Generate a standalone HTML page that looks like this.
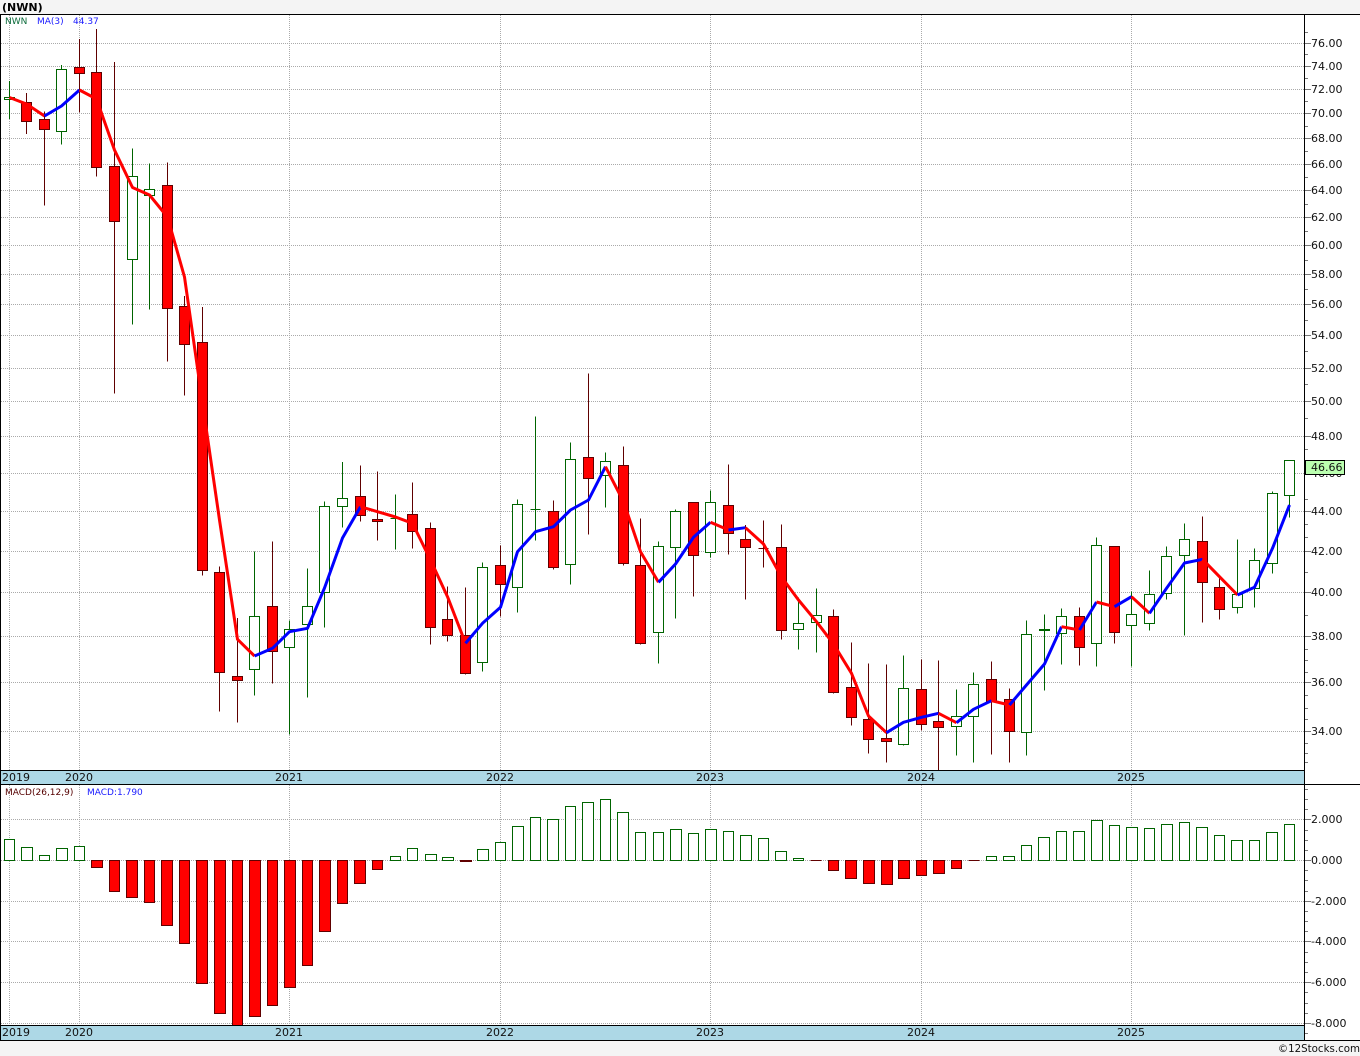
<!DOCTYPE html>
<html>
<head>
<meta charset="utf-8">
<title>NWN</title>
<style>
html,body{margin:0;padding:0;background:#f4f4f4;width:1360px;height:1056px;overflow:hidden}
svg{display:block}
text{font-family:"DejaVu Sans","Liberation Sans",sans-serif;font-size:11px;fill:#111}
</style>
</head>
<body>
<svg width="1360" height="1056" viewBox="0 0 1360 1056" xmlns="http://www.w3.org/2000/svg">
<rect x="0" y="0" width="1360" height="1056" fill="#f4f4f4"/>
<rect x="0" y="14" width="1360" height="1026" fill="#fff"/>
<text x="2" y="11" style="font-weight:bold;fill:#000">(NWN)</text>

<!-- grid -->
<g shape-rendering="crispEdges" fill="none" stroke="#aaaaaa" stroke-dasharray="1 1">
<path d="M1 43.5H1304M1 66.5H1304M1 89.5H1304M1 113.5H1304M1 138.5H1304M1 164.5H1304M1 190.5H1304M1 217.5H1304M1 245.5H1304M1 274.5H1304M1 304.5H1304M1 335.5H1304M1 368.5H1304M1 401.5H1304M1 436.5H1304M1 473.5H1304M1 511.5H1304M1 551.5H1304M1 592.5H1304M1 636.5H1304M1 682.5H1304M1 731.5H1304"/>
<path d="M1 819.5H1304M1 860.5H1304M1 901.5H1304M1 941.5H1304M1 982.5H1304M1 1023.5H1304"/>
<path d="M9.5 15V770M79.5 15V770M289.5 15V770M500.5 15V770M710.5 15V770M921.5 15V770M1131.5 15V770"/>
<path d="M9.5 785V1025M79.5 785V1025M289.5 785V1025M500.5 785V1025M710.5 785V1025M921.5 785V1025M1131.5 785V1025"/>
</g>

<text x="5" y="24" style="font-size:9px;fill:#0a6a3a">NWN</text>
<text x="37" y="24" style="font-size:9px;fill:#1a1aff">MA(3)</text>
<text x="73" y="24" style="font-size:9px;fill:#1a1aff">44.37</text>
<text x="5" y="795" style="font-size:9px;fill:#500">MACD(26,12,9)</text>
<text x="87" y="795" style="font-size:9px;fill:#1a1aff">MACD:1.790</text>

<!-- wicks -->
<g shape-rendering="crispEdges" fill="none">
<path stroke="#006400" d="M9.5 81V119M61.5 65V144.5M132.5 148.5V324.5M149.5 163.5V309.5M254.5 551.5V695.5M289.5 620.5V734.5M307.5 568.5V697.5M324.5 501.5V627.5M342.5 462V527.5M395.5 494.5V549.5M482.5 562.5V671.5M517.5 499.5V612.5M535.5 416.5V540.5M570.5 442.5V584.5M605.5 452.5V507.5M658.5 541.5V663.5M675.5 509.5V618.5M710.5 490.5V557.5M798.5 597.5V649.5M816.5 588.5V652.5M903.5 655.5V745.5M956.5 689.5V755.5M973.5 672.5V762.5M1026.5 620.5V755.5M1044.5 614.5V690.5M1061.5 608.5V664.5M1096.5 537.5V666.5M1131.5 591.5V666.5M1149.5 570.5V630.5M1166.5 546.5V599.5M1184.5 523.5V635.5M1237.5 539.5V613.5M1254.5 548.5V607.5M1272.5 491.5V573.5M1289.5 460.5V517.5"/>
<path stroke="#600000" d="M26.5 93V134M44.5 111.5V205.5M79.5 39V112.5M96.5 29V176.5M114.5 62V393.5M167.5 162.5V361.5M184.5 296V395.5M202.5 307V575.5M219.5 566.5V711.5M237.5 618V722.5M272.5 541.5V683.5M360.5 465.5V521.5M377.5 471.5V540.5M412.5 482.5V548.5M430.5 522.5V644.5M447.5 586.5V641.5M465.5 587.5V674.5M500.5 545.5V616.5M553.5 500.5V569.5M588.5 373.5V534.5M623.5 446.5V565.5M640.5 518.5V644.5M693.5 502V596.5M728.5 464.5V554.5M745.5 525V599.5M763.5 520.5V567.5M781.5 524.5V639.5M833.5 609.5V693.5M851.5 642.5V725.5M868.5 663.5V753.5M886.5 664.5V762.5M921.5 659.5V730.5M938.5 660.5V770M991.5 661.5V754.5M1009.5 688.5V762.5M1079.5 607.5V665.5M1114.5 546.5V643.5M1202.5 516.5V622.5M1219.5 578.5V619.5"/>
</g>

<!-- bodies -->
<g shape-rendering="crispEdges">
<path fill="#fff" stroke="#006400" d="M4.5 97.5h10V99.5h-10zM56.5 69.5h10V131.5h-10zM127.5 176.5h10V259.5h-10zM144.5 189.5h10V195.5h-10zM249.5 616.5h10V669.5h-10zM284.5 629.5h10V647.5h-10zM302.5 606.5h10V624.5h-10zM319.5 506.5h10V592.5h-10zM337.5 498.5h10V506.5h-10zM390.5 518.5h10zM477.5 567.5h10V662.5h-10zM512.5 504.5h10V587.5h-10zM530.5 509.5h10zM565.5 459.5h10V564.5h-10zM600.5 461.5h10V475.5h-10zM653.5 546.5h10V632.5h-10zM670.5 511.5h10V547.5h-10zM705.5 502.5h10V552.5h-10zM793.5 623.5h10V629.5h-10zM811.5 615.5h10V622.5h-10zM898.5 688.5h10V744.5h-10zM951.5 716.5h10V726.5h-10zM968.5 684.5h10V716.5h-10zM1021.5 634.5h10V732.5h-10zM1039.5 629.5h10V630.5h-10zM1056.5 616.5h10V633.5h-10zM1091.5 545.5h10V643.5h-10zM1126.5 614.5h10V625.5h-10zM1144.5 594.5h10V623.5h-10zM1161.5 556.5h10V593.5h-10zM1179.5 539.5h10V555.5h-10zM1232.5 594.5h10V607.5h-10zM1249.5 560.5h10V588.5h-10zM1267.5 493.5h10V563.5h-10zM1284.5 460.5h10V495.5h-10z"/>
<path fill="#f00" stroke="#600000" d="M21.5 102.5h10V121.5h-10zM39.5 119.5h10V129.5h-10zM74.5 67.5h10V73.5h-10zM91.5 72.5h10V167.5h-10zM109.5 166.5h10V221.5h-10zM162.5 185.5h10V308.5h-10zM179.5 306.5h10V344.5h-10zM197.5 342.5h10V570.5h-10zM214.5 572.5h10V672.5h-10zM232.5 676.5h10V680.5h-10zM267.5 606.5h10V651.5h-10zM355.5 496.5h10V515.5h-10zM372.5 519.5h10V521.5h-10zM407.5 514.5h10V531.5h-10zM425.5 528.5h10V627.5h-10zM442.5 619.5h10V635.5h-10zM460.5 635.5h10V673.5h-10zM495.5 565.5h10V584.5h-10zM548.5 511.5h10V567.5h-10zM583.5 457.5h10V478.5h-10zM618.5 465.5h10V563.5h-10zM635.5 565.5h10V643.5h-10zM688.5 502.5h10V555.5h-10zM723.5 505.5h10V533.5h-10zM740.5 539.5h10V547.5h-10zM758.5 548.5h10zM776.5 547.5h10V630.5h-10zM828.5 616.5h10V692.5h-10zM846.5 687.5h10V717.5h-10zM863.5 719.5h10V739.5h-10zM881.5 738.5h10V741.5h-10zM916.5 689.5h10V724.5h-10zM933.5 721.5h10V727.5h-10zM986.5 679.5h10V701.5h-10zM1004.5 699.5h10V731.5h-10zM1074.5 616.5h10V647.5h-10zM1109.5 546.5h10V632.5h-10zM1197.5 541.5h10V582.5h-10zM1214.5 587.5h10V609.5h-10z"/>
</g>

<!-- moving average -->
<g fill="none" stroke-width="3" stroke-linejoin="round">
<polyline stroke="#f00" points="9.5,97.5 26.5,104 44.5,116"/>
<polyline stroke="#00f" points="44.5,116 61.5,106 79.5,90"/>
<polyline stroke="#f00" points="79.5,90 96.5,99 114.5,150 132.5,187.5 149.5,195 167.5,217 184.5,277 202.5,403 219.5,520 237.5,639.3 254.5,656"/>
<polyline stroke="#00f" points="254.5,656 272.5,648.3 289.5,631.7 307.5,628.3 324.5,588 342.5,538 360.5,506.7"/>
<polyline stroke="#f00" points="360.5,506.7 377.5,511.7 395.5,517 412.5,523.3 430.5,560 447.5,596.7 465.5,643.3"/>
<polyline stroke="#00f" points="465.5,643.3 482.5,623.3 500.5,607.3 517.5,551.7 535.5,531.7 553.5,526.7 570.5,510 588.5,500 605.5,466.7"/>
<polyline stroke="#f00" points="605.5,466.7 623.5,501.7 640.5,551.7 658.5,582.3"/>
<polyline stroke="#00f" points="658.5,582.3 675.5,564 693.5,537.3 710.5,522.3"/>
<polyline stroke="#f00" points="710.5,522.3 728.5,530"/>
<polyline stroke="#00f" points="728.5,530 745.5,527.7"/>
<polyline stroke="#f00" points="745.5,527.7 763.5,544 781.5,577 798.5,600 816.5,621.7 833.5,644 851.5,673.3 868.5,716 886.5,732.7"/>
<polyline stroke="#00f" points="886.5,732.7 903.5,722.3 921.5,717.3 938.5,713.3"/>
<polyline stroke="#f00" points="938.5,713.3 956.5,722.7"/>
<polyline stroke="#00f" points="956.5,722.7 973.5,709.3 991.5,700.7"/>
<polyline stroke="#f00" points="991.5,700.7 1009.5,705"/>
<polyline stroke="#00f" points="1009.5,705 1026.5,685 1044.5,664 1061.5,626.7"/>
<polyline stroke="#f00" points="1061.5,626.7 1079.5,630"/>
<polyline stroke="#00f" points="1079.5,630 1096.5,602"/>
<polyline stroke="#f00" points="1096.5,602 1114.5,606.7"/>
<polyline stroke="#00f" points="1114.5,606.7 1131.5,596.7"/>
<polyline stroke="#f00" points="1131.5,596.7 1149.5,613.3"/>
<polyline stroke="#00f" points="1149.5,613.3 1166.5,588.3 1184.5,563 1202.5,559.3"/>
<polyline stroke="#f00" points="1202.5,559.3 1219.5,576.7 1237.5,595"/>
<polyline stroke="#00f" points="1237.5,595 1254.5,587.3 1272.5,548.3 1289.5,505"/>
</g>

<!-- MACD bars -->
<g shape-rendering="crispEdges">
<path fill="#fff" stroke="#006400" d="M4.5 839.5h10V860.5h-10zM21.5 847.5h11V860.5h-11zM39.5 855.5h10V860.5h-10zM56.5 848.5h11V860.5h-11zM74.5 846.5h10V860.5h-10zM390.5 856.5h10V860.5h-10zM407.5 848.5h10V860.5h-10zM425.5 854.5h11V860.5h-11zM442.5 857.5h11V860.5h-11zM477.5 849.5h11V860.5h-11zM495.5 842.5h10V860.5h-10zM512.5 826.5h11V860.5h-11zM530.5 817.5h10V860.5h-10zM547.5 819.5h11V860.5h-11zM565.5 806.5h10V860.5h-10zM582.5 802.5h11V860.5h-11zM600.5 799.5h10V860.5h-10zM617.5 812.5h11V860.5h-11zM635.5 832.5h10V860.5h-10zM653.5 832.5h10V860.5h-10zM670.5 829.5h11V860.5h-11zM688.5 833.5h10V860.5h-10zM705.5 829.5h11V860.5h-11zM723.5 831.5h10V860.5h-10zM740.5 835.5h11V860.5h-11zM758.5 838.5h10V860.5h-10zM775.5 851.5h11V860.5h-11zM793.5 858.5h10V860.5h-10zM986.5 856.5h10V860.5h-10zM1003.5 856.5h11V860.5h-11zM1021.5 845.5h10V860.5h-10zM1038.5 837.5h11V860.5h-11zM1056.5 831.5h10V860.5h-10zM1073.5 831.5h11V860.5h-11zM1091.5 820.5h11V860.5h-11zM1109.5 825.5h10V860.5h-10zM1126.5 827.5h11V860.5h-11zM1144.5 828.5h10V860.5h-10zM1161.5 824.5h11V860.5h-11zM1179.5 822.5h10V860.5h-10zM1196.5 827.5h11V860.5h-11zM1214.5 835.5h10V860.5h-10zM1231.5 840.5h11V860.5h-11zM1249.5 840.5h10V860.5h-10zM1266.5 832.5h11V860.5h-11zM1284.5 824.5h10V860.5h-10z"/>
<path fill="#f00" stroke="#600000" d="M91.5 860.5h11V867.5h-11zM109.5 860.5h10V891.5h-10zM126.5 860.5h11V897.5h-11zM144.5 860.5h10V902.5h-10zM161.5 860.5h11V925.5h-11zM179.5 860.5h10V943.5h-10zM196.5 860.5h11V983.5h-11zM214.5 860.5h11V1013.5h-11zM232.5 860.5h10V1026h-10zM249.5 860.5h11V1016.5h-11zM267.5 860.5h10V1005.5h-10zM284.5 860.5h11V987.5h-11zM302.5 860.5h10V965.5h-10zM319.5 860.5h11V931.5h-11zM337.5 860.5h10V903.5h-10zM354.5 860.5h11V883.5h-11zM372.5 860.5h10V869.5h-10zM460.5 860.5h11V861.5h-11zM810.5 860.5h11zM828.5 860.5h10V870.5h-10zM845.5 860.5h11V878.5h-11zM863.5 860.5h11V883.5h-11zM881.5 860.5h11V884.5h-11zM898.5 860.5h11V878.5h-11zM916.5 860.5h10V875.5h-10zM933.5 860.5h11V873.5h-11zM951.5 860.5h10V868.5h-10zM968.5 860.5h11z"/>
</g>

<!-- date bars -->
<g shape-rendering="crispEdges">
<rect x="0" y="771" width="1304" height="13" fill="#add8e6"/>
<rect x="0" y="1026" width="1304" height="14" fill="#add8e6"/>
<rect x="0" y="14" width="1360" height="1" fill="#000"/>
<rect x="0" y="770" width="1304" height="1" fill="#000"/>
<rect x="0" y="784" width="1360" height="1" fill="#000"/>
<rect x="0" y="1025" width="1304" height="1" fill="#000"/>
<rect x="0" y="1040" width="1360" height="1" fill="#000"/>
<rect x="0" y="14" width="1" height="1027" fill="#000"/>
<rect x="1304" y="14" width="1" height="1027" fill="#000"/>
</g>
<g>
<text x="2" y="781">2019</text><text x="79" y="781" text-anchor="middle">2020</text><text x="289" y="781" text-anchor="middle">2021</text><text x="500" y="781" text-anchor="middle">2022</text><text x="710" y="781" text-anchor="middle">2023</text><text x="921" y="781" text-anchor="middle">2024</text><text x="1131" y="781" text-anchor="middle">2025</text>
<text x="2" y="1036">2019</text><text x="79" y="1036" text-anchor="middle">2020</text><text x="289" y="1036" text-anchor="middle">2021</text><text x="500" y="1036" text-anchor="middle">2022</text><text x="710" y="1036" text-anchor="middle">2023</text><text x="921" y="1036" text-anchor="middle">2024</text><text x="1131" y="1036" text-anchor="middle">2025</text>
</g>

<!-- axis ticks -->
<g shape-rendering="crispEdges" fill="none" stroke="#777">
<path d="M1305 32.5h3M1305 54.5h3M1305 78.5h3M1305 101.5h3M1305 126.5h3M1305 151.5h3M1305 177.5h3M1305 204.5h3M1305 231.5h3M1305 260.5h3M1305 289.5h3M1305 320.5h3M1305 351.5h3M1305 384.5h3M1305 418.5h3M1305 449.5h3M1305 499.5h3M1305 524.5h3M1305 537.5h3M1305 572.5h3M1305 615.5h3M1305 649.5h3M1305 660.5h3M1305 672.5h3M1305 695.5h3M1305 708.5h3M1305 719.5h3M1305 743.5h3M1305 753.5h3M1305 762.5h3"/>
<path d="M1305 43.5h6M1305 66.5h6M1305 89.5h6M1305 113.5h6M1305 138.5h6M1305 164.5h6M1305 190.5h6M1305 217.5h6M1305 245.5h6M1305 274.5h6M1305 304.5h6M1305 335.5h6M1305 368.5h6M1305 401.5h6M1305 436.5h6M1305 473.5h6M1305 511.5h6M1305 551.5h6M1305 592.5h6M1305 636.5h6M1305 682.5h6M1305 731.5h6"/>
<path d="M1305 789.5h3M1305 799.5h3M1305 809.5h3M1305 830.5h3M1305 840.5h3M1305 850.5h3M1305 870.5h3M1305 880.5h3M1305 891.5h3M1305 911.5h3M1305 921.5h3M1305 931.5h3M1305 952.5h3M1305 962.5h3M1305 972.5h3M1305 992.5h3M1305 1003.5h3M1305 1013.5h3M1305 1033.5h3"/>
<path d="M1305 819.5h6M1305 860.5h6M1305 901.5h6M1305 941.5h6M1305 982.5h6M1305 1023.5h6"/>
</g>

<!-- axis labels -->
<g>
<text x="1311" y="47">76.00</text><text x="1311" y="70">74.00</text><text x="1311" y="93">72.00</text><text x="1311" y="117">70.00</text><text x="1311" y="142">68.00</text><text x="1311" y="168">66.00</text><text x="1311" y="194">64.00</text><text x="1311" y="221">62.00</text><text x="1311" y="249">60.00</text><text x="1311" y="278">58.00</text><text x="1311" y="308">56.00</text><text x="1311" y="339">54.00</text><text x="1311" y="372">52.00</text><text x="1311" y="405">50.00</text><text x="1311" y="440">48.00</text><text x="1311" y="477">46.00</text><text x="1311" y="515">44.00</text><text x="1311" y="555">42.00</text><text x="1311" y="596">40.00</text><text x="1311" y="640">38.00</text><text x="1311" y="686">36.00</text><text x="1311" y="735">34.00</text>
<text x="1311" y="823">2.000</text><text x="1311" y="864">0.000</text><text x="1311" y="905">-2.000</text><text x="1311" y="945">-4.000</text><text x="1311" y="986">-6.000</text><text x="1311" y="1027">-8.000</text>
</g>

<!-- last price box -->
<rect x="1305.5" y="460.5" width="39" height="14" fill="#bbffb0" stroke="#000" shape-rendering="crispEdges"/>
<text x="1311" y="471">46.66</text>

<text x="1360" y="1052" text-anchor="end" style="font-size:10.25px">©12Stocks.com</text>
</svg>
</body>
</html>
